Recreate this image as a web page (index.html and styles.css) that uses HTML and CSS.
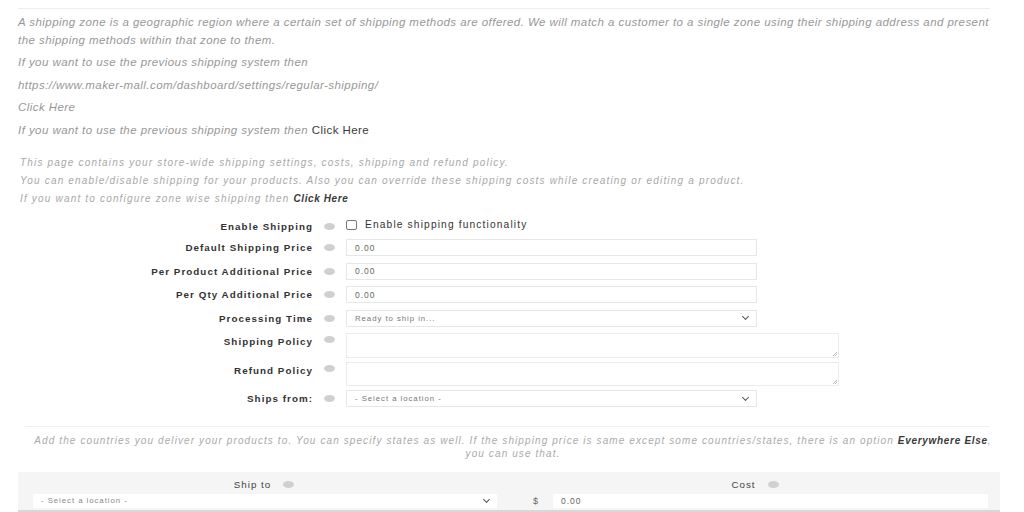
FILE: index.html
```html
<!DOCTYPE html>
<html>
<head>
<meta charset="utf-8">
<link rel="stylesheet" href="styles.css">
</head>
<body>
<div class="page">
  <div class="rule top-rule"></div>
  <div class="intro">
    <p class="p-first">A shipping zone is a geographic region where a certain set of shipping methods are offered. We will match a customer to a single zone using their shipping address and present the shipping methods within that zone to them.</p>
    <p>If you want to use the previous shipping system then</p>
    <p>https://www.maker-mall.com/dashboard/settings/regular-shipping/</p>
    <p>Click Here</p>
    <p>If you want to use the previous shipping system then <b class="link">Click Here</b></p>
  </div>

  <div class="notes">
    <p>This page contains your store-wide shipping settings, costs, shipping and refund policy.</p>
    <p>You can enable/disable shipping for your products. Also you can override these shipping costs while creating or editing a product.</p>
    <p>If you want to configure zone wise shipping then <b class="link">Click Here</b></p>
  </div>

  <div class="form">
    <div class="row r-check">
      <label class="lbl">Enable Shipping</label><span class="help"></span>
      <div class="field"><span class="checkbox"></span><span class="check-text">Enable shipping functionality</span></div>
    </div>
    <div class="row r-input">
      <label class="lbl">Default Shipping Price</label><span class="help"></span>
      <div class="field"><div class="input">0.00</div></div>
    </div>
    <div class="row r-input">
      <label class="lbl">Per Product Additional Price</label><span class="help"></span>
      <div class="field"><div class="input">0.00</div></div>
    </div>
    <div class="row r-input">
      <label class="lbl">Per Qty Additional Price</label><span class="help"></span>
      <div class="field"><div class="input">0.00</div></div>
    </div>
    <div class="row r-input">
      <label class="lbl">Processing Time</label><span class="help"></span>
      <div class="field"><div class="input select"><span>Ready to ship in...</span><span class="chev"></span></div></div>
    </div>
    <div class="row r-text">
      <label class="lbl">Shipping Policy</label><span class="help"></span>
      <div class="field"><div class="textarea"><span class="grip"></span></div></div>
    </div>
    <div class="row r-text r-text2">
      <label class="lbl">Refund Policy</label><span class="help"></span>
      <div class="field"><div class="textarea"><span class="grip"></span></div></div>
    </div>
    <div class="row r-input">
      <label class="lbl">Ships from:</label><span class="help"></span>
      <div class="field"><div class="input select"><span>- Select a location -</span><span class="chev"></span></div></div>
    </div>
  </div>

  <div class="rule mid-rule"></div>
  <div class="countries"><span>Add the countries you deliver your products to. You can specify states as well. If the shipping price is same except some countries/states, there is an option </span><b>Everywhere Else</b><span>,</span><br><span>you can use that.</span></div>

  <div class="ship-table">
    <div class="col">
      <div class="th">Ship to <span class="help"></span></div>
      <div class="input select loc"><span>- Select a location -</span><span class="chev"></span></div>
    </div>
    <div class="col">
      <div class="th">Cost <span class="help"></span></div>
      <div class="cost"><span class="dollar">$</span><div class="input cost-input">0.00</div></div>
    </div>
  </div>
</div>
</body>
</html>
```

FILE: styles.css
```css
html, body {
  margin: 0;
  padding: 0;
  background: #ffffff;
}
body {
  font-family: "Liberation Sans", Arial, sans-serif;
  width: 1024px;
  height: 512px;
  overflow: hidden;
}
.page {
  padding: 8px 0 0 18px;
  width: 982px;
}
.rule {
  height: 1px;
  background: #eeeeee;
}
.top-rule {
  width: 972px;
}
.intro {
  color: #979797;
  font-style: italic;
  font-size: 11.5px;
  letter-spacing: 0.44px;
  padding-top: 5px;
}
.intro p {
  margin: 0 0 5px;
  line-height: 17.5px;
}
.intro .link {
  color: #3a3a3a;
  font-weight: normal;
  font-style: normal;
}
.notes {
  color: #a8a8a8;
  font-style: italic;
  font-size: 10px;
  letter-spacing: 1.18px;
  padding: 10px 0 0 2px;
}
.notes p {
  margin: 0;
  line-height: 18px;
}
.notes .link {
  color: #3a3a3a;
  letter-spacing: 0.6px;
}
.form {
  display: flex;
  flex-direction: column;
  margin-top: 9px;
}
.row {
  display: flex;
  align-items: center;
}
.lbl {
  width: 295px;
  text-align: right;
  font-weight: bold;
  font-size: 9.8px;
  letter-spacing: 1.05px;
  color: #333;
}
.help {
  display: inline-block;
  width: 11px;
  height: 7px;
  border-radius: 50%;
  background: #d0d0d0;
  margin: 0 11px 0 11px;
}
.field {
  flex: 0 0 auto;
}
.r-check {
  height: 15px;
  margin-bottom: 7px;
}
.r-check .lbl {
  position: relative;
  top: 2px;
}
.r-check .help {
  position: relative;
  top: 2px;
}
.r-check .field {
  display: flex;
  align-items: center;
}
.checkbox {
  width: 9px;
  height: 8px;
  border: 1px solid #777;
  border-radius: 2px;
  margin-right: 8px;
}
.check-text {
  font-size: 10.2px;
  letter-spacing: 1.15px;
  color: #333;
}
.r-input {
  height: 17px;
  margin-bottom: 6.5px;
}
.input {
  box-sizing: border-box;
  width: 411px;
  height: 17px;
  border: 1px solid #e6e6e6;
  background: #fff;
  font-size: 8.5px;
  letter-spacing: 1px;
  color: #666;
  padding: 0 8px;
  display: flex;
  align-items: center;
}
.select {
  justify-content: space-between;
  font-size: 7.8px;
  letter-spacing: 0.95px;
  color: #777;
}
.chev {
  width: 4px;
  height: 4px;
  border-right: 1.2px solid #555;
  border-bottom: 1.2px solid #555;
  transform: rotate(45deg);
  margin: -3px 0 0 0;
}
.r-text {
  align-items: flex-start;
  margin-bottom: 4px;
}
.r-text .lbl, .r-text .help {
  margin-top: 3px;
}
.textarea {
  box-sizing: border-box;
  width: 493px;
  height: 25px;
  border: 1px solid #ececec;
  position: relative;
}
.r-text2 .textarea {
  height: 24px;
}
.grip {
  position: absolute;
  right: 1px;
  bottom: 1px;
  width: 4px;
  height: 4px;
  background: linear-gradient(135deg, transparent 45%, #bbb 45%, #bbb 55%, transparent 55%, transparent 75%, #bbb 75%, #bbb 85%, transparent 85%);
}
.mid-rule {
  margin: 12px 0 0 7px;
  width: 965px;
  background: #f0f0f0;
}
.countries {
  text-align: center;
  color: #aaa;
  font-style: italic;
  font-size: 10px;
  letter-spacing: 1.1px;
  line-height: 13px;
  padding: 7px 0 0 0;
  width: 990px;
}
.countries b {
  color: #3a3a3a;
  letter-spacing: 0.7px;
}
.ship-table {
  margin-top: 12px;
  background: #f5f5f5;
  width: 982px;
  display: grid;
  grid-template-columns: 492px 490px;
  height: 38px;
  border-bottom: 2px solid #d8d8d8;
}
.col {
  display: flex;
  flex-direction: column;
}
.th {
  text-align: center;
  font-size: 9.8px;
  letter-spacing: 1px;
  color: #444;
  padding-top: 6px;
  height: 14px;
  display: flex;
  justify-content: center;
  align-items: center;
}
.th .help {
  margin: 0 0 0 12px;
}
.loc {
  width: 464px;
  margin: 2px 0 0 15px;
  height: 14px;
  border: none;
  font-size: 7.8px;
  color: #888;
}
.cost {
  display: flex;
  align-items: center;
  margin-top: 2px;
}
.dollar {
  box-sizing: border-box;
  width: 43px;
  padding-left: 23px;
  font-size: 9px;
  color: #666;
}
.cost-input {
  width: 435px;
  height: 14px;
  border: none;
  font-size: 8.5px;
}
```
